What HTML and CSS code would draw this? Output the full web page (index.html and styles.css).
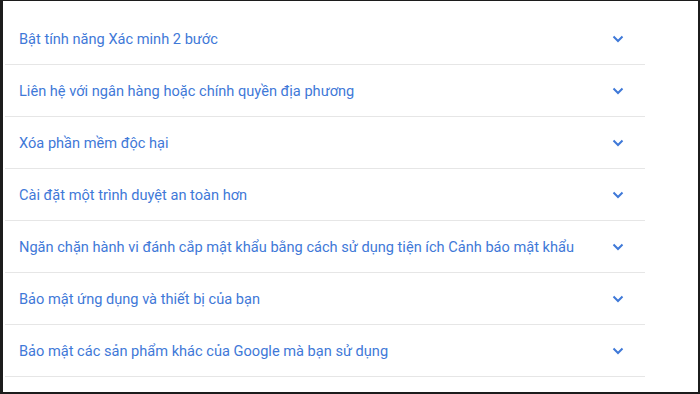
FILE: index.html
```html
<!DOCTYPE html>
<html lang="vi">
<head>
<meta charset="utf-8">
<link rel="stylesheet" href="styles.css">
</head>
<body>
<div class="frame">
  <ul class="list">
    <li class="row"><span class="label">Bật tính năng Xác minh 2 bước</span><svg class="chev" viewBox="0 0 12 8"><path d="M1.5 1.5 L6 6 L10.5 1.5"/></svg></li>
    <li class="row"><span class="label">Liên hệ với ngân hàng hoặc chính quyền địa phương</span><svg class="chev" viewBox="0 0 12 8"><path d="M1.5 1.5 L6 6 L10.5 1.5"/></svg></li>
    <li class="row"><span class="label">Xóa phần mềm độc hại</span><svg class="chev" viewBox="0 0 12 8"><path d="M1.5 1.5 L6 6 L10.5 1.5"/></svg></li>
    <li class="row"><span class="label">Cài đặt một trình duyệt an toàn hơn</span><svg class="chev" viewBox="0 0 12 8"><path d="M1.5 1.5 L6 6 L10.5 1.5"/></svg></li>
    <li class="row"><span class="label">Ngăn chặn hành vi đánh cắp mật khẩu bằng cách sử dụng tiện ích Cảnh báo mật khẩu</span><svg class="chev" viewBox="0 0 12 8"><path d="M1.5 1.5 L6 6 L10.5 1.5"/></svg></li>
    <li class="row"><span class="label">Bảo mật ứng dụng và thiết bị của bạn</span><svg class="chev" viewBox="0 0 12 8"><path d="M1.5 1.5 L6 6 L10.5 1.5"/></svg></li>
    <li class="row"><span class="label">Bảo mật các sản phẩm khác của Google mà bạn sử dụng</span><svg class="chev" viewBox="0 0 12 8"><path d="M1.5 1.5 L6 6 L10.5 1.5"/></svg></li>
  </ul>
</div>
</body>
</html>
```

FILE: styles.css
```css
html, body {
  margin: 0;
  padding: 0;
  background: #1c1c1c;
}
.frame {
  box-sizing: border-box;
  width: 700px;
  height: 394px;
  background: #ffffff;
  border-style: solid;
  border-color: #1c1c1c;
  border-width: 1px 2px 2px 3px;
  overflow: hidden;
}
.list {
  list-style: none;
  margin: 0;
  padding: 12px 0 0 2px;
  width: 640px;
}
.row {
  display: flex;
  align-items: center;
  justify-content: space-between;
  height: 51px;
  border-bottom: 1px solid #e6e6e6;
  padding: 0 21px 0 14px;
  font-family: Roboto, "Noto Sans", sans-serif;
  font-size: 14.6px;
  color: #3f79d8;
}
.chev {
  width: 12px;
  height: 8px;
  fill: none;
  stroke: #3f79d8;
  stroke-width: 2;
}
```
